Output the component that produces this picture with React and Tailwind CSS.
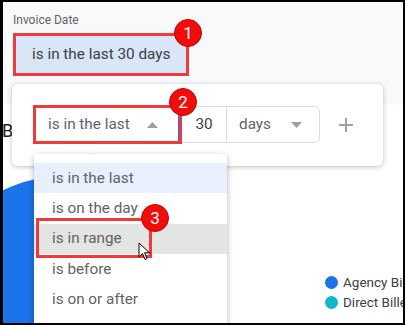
import React from 'react';

const Badge = ({ n, className }) => (
    <div className={`absolute w-[28px] h-[28px] rounded-full bg-[#f20d0d] border border-[#c40000] text-white text-[17px] leading-none flex items-center justify-center ${className}`}>
        {n}
    </div>
);

const Caret = ({ up }) => (
    <svg width="11" height="6" viewBox="0 0 11 6">
        {up ? <path d="M0 6 L5.5 0 L11 6 Z" fill="#9aa0a6" /> : <path d="M0 0 L5.5 6 L11 0 Z" fill="#9aa0a6" />}
    </svg>
);

const options = ['is in the last', 'is on the day', 'is in range', 'is before', 'is on or after'];

export default function App() {
    return (
        <div className="relative w-[405px] h-[325px] overflow-hidden bg-white border-black border-t-2 border-b-2 border-l-[3px] border-r-2 font-['Roboto',sans-serif]">
            {/* filter chip area */}
            <div className="h-[102px] bg-[#f8f9fa] pl-[10px] pt-[10px]">
                <div className="text-[12px] leading-[16px] text-[#5f6368]">Invoice Date</div>
                <div className="mt-[5px] w-[176px] h-[43px] border-[3px] border-[#f03a3a] bg-[#d9e6f8] flex items-center pl-[16px] text-[15.3px] text-[#3c4043]">
                    is in the last 30 days
                </div>
            </div>

            {/* chart section */}
            <div className="relative h-[219px]">
                <div className="pt-[15px] -ml-[1px] text-[18px] leading-[24px] text-[#202124]">B</div>
                <svg className="absolute left-0 top-0" width="400" height="219" viewBox="3 104 400 219">
                    <circle cx="70" cy="330" r="155" fill="#1a73e8" />
                </svg>
                <div className="absolute left-[322px] top-[172px] w-[78px] overflow-hidden flex flex-col gap-[7px] text-[13.5px] leading-[13px] text-[#3c4043] whitespace-nowrap">
                    <div className="flex items-center gap-[5px]">
                        <span className="shrink-0 w-[13px] h-[13px] rounded-full bg-[#1a73e8]" />
                        <span>Agency Billed</span>
                    </div>
                    <div className="flex items-center gap-[5px]">
                        <span className="shrink-0 w-[13px] h-[13px] rounded-full bg-[#12b5cb]" />
                        <span>Direct Billed</span>
                    </div>
                </div>
            </div>

            {/* condition popup */}
            <div className="absolute left-[9px] top-[82px] w-[371px] h-[82px] bg-white rounded-[6px] shadow-[0_1px_5px_rgba(0,0,0,0.25)] pl-[21px] pt-[21px]">
                <div className="flex items-center h-[39px]">
                    <div className="w-[149px] h-[39px] border-[3px] border-[#f03a3a] flex">
                        <div className="flex-1 flex items-center justify-between pl-[12px] pr-[20px] border-r border-[#1a73e8] text-[15.3px] text-[#5f6368]">
                            <span>is in the last</span>
                            <Caret up />
                        </div>
                    </div>
                    <div className="w-[44px] h-[37px] border-y border-[#dadce0] flex items-center justify-center text-[15.3px] text-[#3c4043]">30</div>
                    <div className="w-[94px] h-[37px] border border-[#dadce0] rounded-r-[5px] flex items-center justify-between pl-[12px] pr-[17px] text-[15.3px] text-[#5f6368]">
                        <span>days</span>
                        <Caret />
                    </div>
                    <svg className="ml-[19px]" width="14" height="14" viewBox="0 0 14 14">
                        <path d="M7 0 V14 M0 7 H14" stroke="#9aa0a6" strokeWidth="2" />
                    </svg>
                </div>
            </div>

            {/* dropdown list */}
            <div className="absolute left-[31px] top-[152px] w-[193px] h-[190px] bg-white rounded-t-[4px] shadow-[0_2px_6px_rgba(0,0,0,0.3)] pt-[9px]">
                {options.map((o, i) => (
                    <div
                        key={o}
                        className={`h-[30.3px] flex items-center pl-[18px] text-[15.3px] text-[#5f6368] ${i === 0 ? 'bg-[#e8f0fe]' : i === 2 ? 'bg-[#e3e4e4]' : ''}`}
                    >
                        {o}
                    </div>
                ))}
            </div>

            {/* annotations */}
            <div className="absolute left-[33px] top-[216px] w-[116px] h-[40px] border-[3px] border-[#f03a3a]" />
            <svg className="absolute left-[135px] top-[240px]" width="13" height="19" viewBox="0 0 13 19">
                <path d="M1 1 L1 15 L4.5 11.5 L7 17.5 L9 16.6 L6.6 10.8 L11.5 10.8 Z" fill="white" stroke="black" strokeWidth="1" strokeLinejoin="round" />
            </svg>
            <Badge n="1" className="left-[171px] top-[17px]" />
            <Badge n="2" className="left-[166px] top-[86px]" />
            <Badge n="3" className="left-[138px] top-[202px]" />
        </div>
    );
}
